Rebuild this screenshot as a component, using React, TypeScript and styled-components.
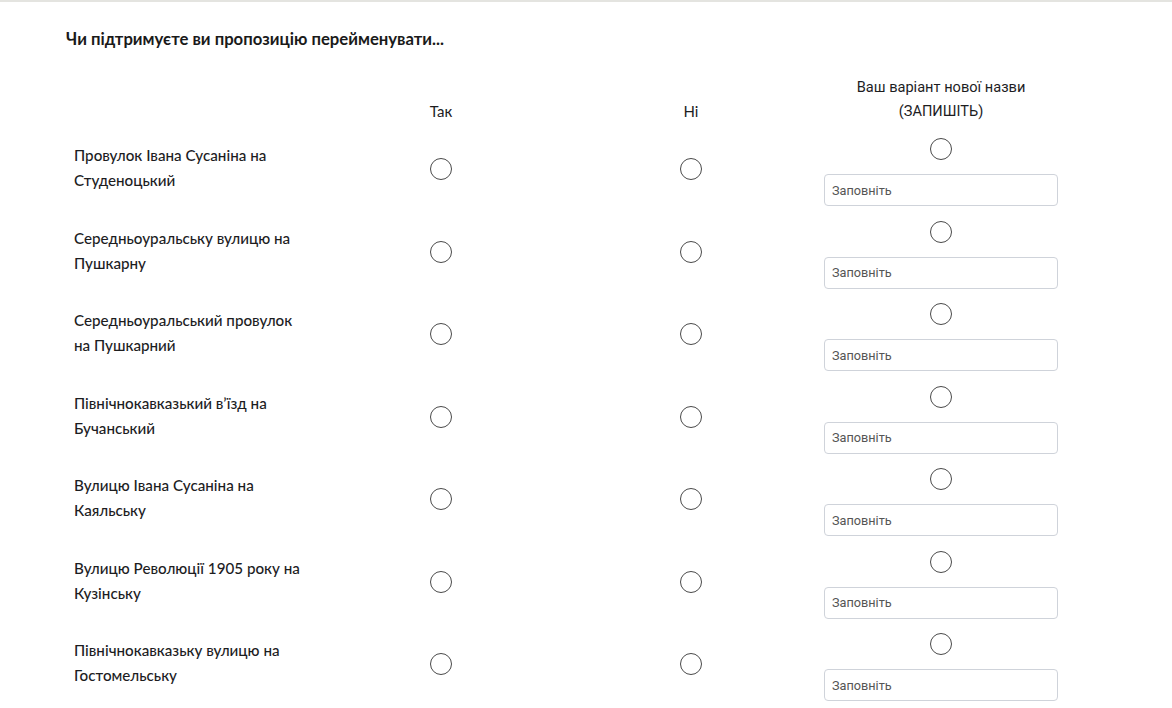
import styled, { createGlobalStyle } from 'styled-components';

const GlobalStyle = createGlobalStyle`
  html, body {
    margin: 0;
    padding: 0;
    background: #fff;
  }
  body {
    font-family: Lato, "Noto Sans", sans-serif;
    color: #1d1d1f;
  }
`

const Page = styled.div`
  border-top: 2px solid #e4e4e0;
  padding: 25px 0 0 66px;
`

const Title = styled.h2`
  margin: 0 0 24px;
  font-size: 16.7px;
  font-weight: 700;
  line-height: 24px;
  color: #1a1a1a;
`

const Grid = styled.div`
  display: grid;
  grid-template-columns: repeat(4, 250px);
`

const HeadCell = styled.div<{ $sans?: boolean }>`
  display: flex;
  flex-direction: column;
  align-items: center;
  justify-content: flex-end;
  padding: 0 8px 13px;
  font-family: ${p => (p.$sans ? 'Roboto, "Noto Sans", sans-serif' : 'Lato, "Noto Sans", sans-serif')};
  font-size: ${p => (p.$sans ? '14.6px' : '15px')};
  line-height: 24px;
  text-align: center;
  color: #1d1d1f;
`

const LabelCell = styled.div`
  display: flex;
  align-items: center;
  height: 82.5px;
  padding: 0 8px;
  box-sizing: border-box;
  font-size: 15.2px;
  font-weight: 500;
  line-height: 25px;
  color: #1d1d1f;
  & > span {
    max-width: 232px;
    margin-top: -18px;
  }
`

const ChoiceCell = styled.div`
  display: flex;
  align-items: center;
  justify-content: center;
  height: 82.5px;
  padding: 0 8px;
  margin-top: -8px;
`

const OtherCell = styled.div`
  display: flex;
  flex-direction: column;
  align-items: center;
  justify-content: center;
  height: 82.5px;
  padding: 0 8px;
  margin-top: -5px;
  gap: 14px;
`

const Radio = styled.input.attrs({ type: 'radio' })`
  appearance: none;
  -webkit-appearance: none;
  width: 22px;
  height: 22px;
  margin: 0;
  border: 1.3px solid #4a4a4a;
  border-radius: 50%;
  background: #fff;
  box-sizing: border-box;
  cursor: pointer;
  &:checked {
    background: radial-gradient(circle, #4a4a4a 0 5px, #fff 6px);
  }
`

const TextInput = styled.input`
  width: 100%;
  height: 32px;
  box-sizing: border-box;
  border: 1px solid #cfd3da;
  border-radius: 4px;
  padding: 0 7px;
  font-family: Roboto, "Noto Sans", sans-serif;
  font-size: 12.7px;
  color: #222;
  outline: none;
  &::placeholder {
    color: #555;
  }
`

const streets = [
  'Провулок Івана Сусаніна на Студеноцький',
  'Середньоуральську вулицю на Пушкарну',
  'Середньоуральський провулок на Пушкарний',
  'Північнокавказький в’їзд на Бучанський',
  'Вулицю Івана Сусаніна на Каяльську',
  'Вулицю Революції 1905 року на Кузінську',
  'Північнокавказьку вулицю на Гостомельську',
]

export default function App() {
  return (
    <>
      <GlobalStyle />
      <Page>
        <Title>Чи підтримуєте ви пропозицію перейменувати...</Title>
        <Grid>
          <HeadCell />
          <HeadCell>Так</HeadCell>
          <HeadCell>Ні</HeadCell>
          <HeadCell $sans>
            <span>Ваш варіант нової назви</span>
            <span>(ЗАПИШІТЬ)</span>
          </HeadCell>
          {streets.map((s, i) => (
            <Row key={i} label={s} name={`q${i}`} />
          ))}
        </Grid>
      </Page>
    </>
  )
}

function Row({ label, name }: { label: string; name: string }) {
  return (
    <>
      <LabelCell><span>{label}</span></LabelCell>
      <ChoiceCell><Radio name={name} value="yes" /></ChoiceCell>
      <ChoiceCell><Radio name={name} value="no" /></ChoiceCell>
      <OtherCell>
        <Radio name={name} value="other" />
        <TextInput placeholder="Заповніть" />
      </OtherCell>
    </>
  )
}
